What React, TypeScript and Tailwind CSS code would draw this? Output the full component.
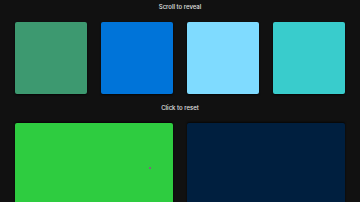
import React from "react";

export default function App() {
  return (
    <div
      className="w-[360px] h-[202px] overflow-hidden bg-[#111111] flex flex-col px-[15px] pt-[3px]"
      style={{ fontFamily: 'Inter, "Liberation Sans", Arial, sans-serif' }}
    >
      <div className="h-[8px] leading-[8px] text-center text-[6px] font-medium text-[#e2e2e2]">
        Scroll to reveal
      </div>
      <div className="mt-[11px] grid grid-cols-4 gap-[14px]">
        <div className="h-[72px] rounded-[2px] bg-[#3D9970] shadow-[0_1px_2px_rgba(0,0,0,0.7)]" />
        <div className="h-[72px] rounded-[2px] bg-[#0074D9] shadow-[0_1px_2px_rgba(0,0,0,0.7)]" />
        <div className="h-[72px] rounded-[2px] bg-[#7FDBFF] shadow-[0_1px_2px_rgba(0,0,0,0.7)]" />
        <div className="h-[72px] rounded-[2px] bg-[#39CCCC] shadow-[0_1px_2px_rgba(0,0,0,0.7)]" />
      </div>
      <div className="mt-[10px] h-[8px] leading-[8px] text-center text-[6px] font-medium text-[#e2e2e2]">
        Click to reset
      </div>
      <div className="mt-[11px] grid grid-cols-2 gap-[14px]">
        <div className="relative h-[100px] rounded-[2px] bg-[#2ECC40] shadow-[0_-1px_2px_rgba(0,0,0,0.7)]">
          <div className="absolute left-[134px] top-[44px] w-[2px] h-[2px] bg-[#7a6a7a]" />
        </div>
        <div className="h-[100px] rounded-[2px] bg-[#001F3F] shadow-[0_-1px_2px_rgba(0,0,0,0.7)]" />
      </div>
    </div>
  );
}
